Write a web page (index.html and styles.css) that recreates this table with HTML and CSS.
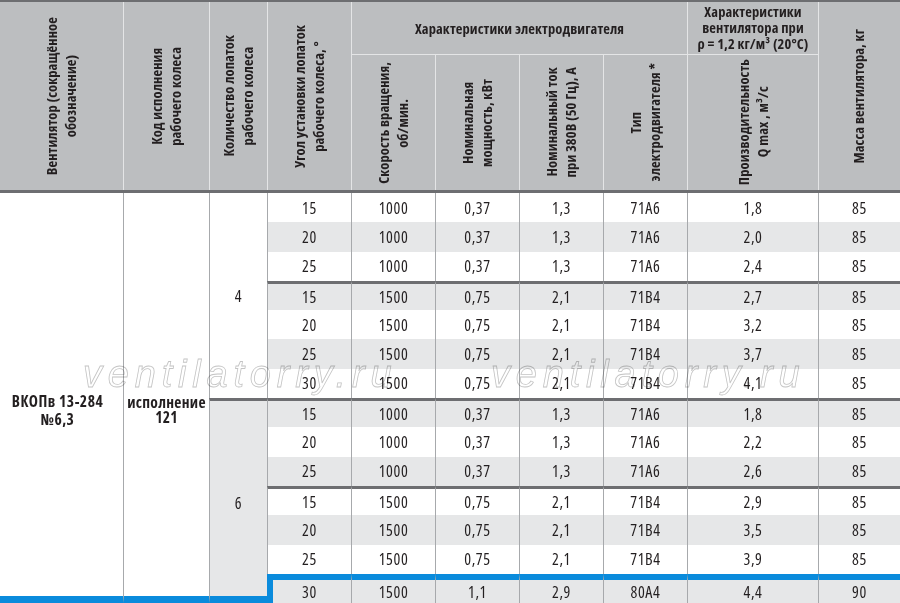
FILE: index.html
```html
<!DOCTYPE html>
<html lang="ru">
<head>
<meta charset="utf-8">
<title>ВКОПв 13-284 №6,3</title>
<link rel="stylesheet" href="styles.css">
</head>
<body>
<div class="sheet">
  <div class="head">
    <div class="hc vt h-fan"><span>Вентилятор (сокращённое<br>обозначение)</span></div>
    <div class="hc vt h-code"><span>Код исполнения<br>рабочего колеса</span></div>
    <div class="hc vt h-blades"><span>Количество лопаток<br>рабочего колеса</span></div>
    <div class="hc vt h-angle"><span>Угол установки лопаток<br>рабочего колеса, °</span></div>
    <div class="hc grp h-motor">Характеристики электродвигателя</div>
    <div class="hc grp h-fanchar">Характеристики<br>вентилятора при<br>ρ = 1,2 кг/м³ (20°С)</div>
    <div class="hc vt h-mass"><span>Масса вентилятора, кг</span></div>
    <div class="hc vt"><span>Скорость вращения,<br>об/мин.</span></div>
    <div class="hc vt"><span>Номинальная<br>мощность, кВт</span></div>
    <div class="hc vt"><span>Номинальный ток<br>при 380В (50 Гц), А</span></div>
    <div class="hc vt"><span>Тип<br>электродвигателя *</span></div>
    <div class="hc vt"><span>Производительность<br>Q max , м³/с</span></div>
  </div>
  <div class="body">
    <div class="fan">ВКОПв 13-284<br>№6,3</div>
    <div class="code">исполнение<br>121</div>
    <div class="blades b4">4</div>
    <div class="blades b6">6</div>

    <div class="row"><div>15</div><div>1000</div><div>0,37</div><div>1,3</div><div>71A6</div><div>1,8</div><div>85</div></div>
    <div class="row g"><div>20</div><div>1000</div><div>0,37</div><div>1,3</div><div>71A6</div><div>2,0</div><div>85</div></div>
    <div class="row"><div>25</div><div>1000</div><div>0,37</div><div>1,3</div><div>71A6</div><div>2,4</div><div>85</div></div>
    <div class="row g sep"><div>15</div><div>1500</div><div>0,75</div><div>2,1</div><div>71B4</div><div>2,7</div><div>85</div></div>
    <div class="row"><div>20</div><div>1500</div><div>0,75</div><div>2,1</div><div>71B4</div><div>3,2</div><div>85</div></div>
    <div class="row g"><div>25</div><div>1500</div><div>0,75</div><div>2,1</div><div>71B4</div><div>3,7</div><div>85</div></div>
    <div class="row"><div>30</div><div>1500</div><div>0,75</div><div>2,1</div><div>71B4</div><div>4,1</div><div>85</div></div>
    <div class="row g sep"><div>15</div><div>1000</div><div>0,37</div><div>1,3</div><div>71A6</div><div>1,8</div><div>85</div></div>
    <div class="row"><div>20</div><div>1000</div><div>0,37</div><div>1,3</div><div>71A6</div><div>2,2</div><div>85</div></div>
    <div class="row g"><div>25</div><div>1000</div><div>0,37</div><div>1,3</div><div>71A6</div><div>2,6</div><div>85</div></div>
    <div class="row sep"><div>15</div><div>1500</div><div>0,75</div><div>2,1</div><div>71B4</div><div>2,9</div><div>85</div></div>
    <div class="row g"><div>20</div><div>1500</div><div>0,75</div><div>2,1</div><div>71B4</div><div>3,5</div><div>85</div></div>
    <div class="row"><div>25</div><div>1500</div><div>0,75</div><div>2,1</div><div>71B4</div><div>3,9</div><div>85</div></div>
    <div class="row g last"><div>30</div><div>1500</div><div>1,1</div><div>2,9</div><div>80A4</div><div>4,4</div><div>90</div></div>
  </div>
  <div class="wm wm1">ventilatorry.ru</div>
  <div class="wm wm2">ventilatorry.ru</div>
</div>
</body>
</html>
```

FILE: styles.css
```css
html, body {
  margin: 0;
  padding: 0;
  background: #ffffff;
}

.sheet {
  position: relative;
  width: 900px;
  height: 603px;
  overflow: hidden;
  font-family: "Open Sans", "Liberation Sans", Arial, sans-serif;
  font-stretch: 75%;
  color: #231f20;
}

/* ---------- header ---------- */
.head {
  display: grid;
  grid-template-columns: 123px 86px 58px 84px 84px 84px 84px 84px 131px 82px;
  grid-template-rows: 53px 135px;
  border-top: 2px solid #6d6e71;
  border-bottom: 3px solid #6d6e71;
  background: #bcbec0;
}

.hc {
  box-sizing: border-box;
  border-left: 1px solid #e4e5e6;
  display: flex;
  align-items: center;
  justify-content: center;
  font-weight: bold;
  font-size: 14.5px;
  letter-spacing: 0.1px;
  text-align: center;
  white-space: nowrap;
}

.h-fan { grid-column: 1; grid-row: 1 / 3; border-left: none; }
.h-code { grid-column: 2; grid-row: 1 / 3; }
.h-blades { grid-column: 3; grid-row: 1 / 3; }
.h-angle { grid-column: 4; grid-row: 1 / 3; }
.h-motor { grid-column: 5 / 9; grid-row: 1; }
.h-fanchar { grid-column: 9; grid-row: 1; line-height: 16px; }
.h-mass { grid-column: 10; grid-row: 1 / 3; }

.grp {
  border-bottom: 1px solid #e4e5e6;
}

.vt span {
  writing-mode: vertical-rl;
  transform: rotate(180deg);
  line-height: 18.5px;
  text-align: center;
}

/* ---------- body ---------- */
.body {
  display: grid;
  grid-template-columns: 123px 86px 58px 84px 84px 84px 84px 84px 131px 82px;
  grid-template-rows: repeat(14, 29.3px);
  font-size: 16px;
  letter-spacing: 0.6px;
}

.body > div,
.row > div {
  box-sizing: border-box;
}

.fan {
  grid-column: 1;
  grid-row: 1 / 15;
  font-weight: bold;
  font-size: 15.5px;
  letter-spacing: 0.5px;
  line-height: 18px;
  text-align: center;
  padding-top: 199px;
  padding-right: 8px;
  border-bottom: 7px solid #0a8bdc;
}

.code {
  grid-column: 2;
  grid-row: 1 / 15;
  font-weight: bold;
  font-size: 15.5px;
  letter-spacing: 0.3px;
  line-height: 15px;
  text-align: center;
  padding-top: 202px;
  border-left: 1px solid #a7a9ac;
  border-bottom: 7px solid #0a8bdc;
}

.blades {
  grid-column: 3;
  display: flex;
  align-items: center;
  justify-content: center;
  border-left: 1px solid #a7a9ac;
}

.b4 { grid-row: 1 / 8; }

.b6 {
  grid-row: 8 / 15;
  background: #e6e7e8;
  border-top: 3px solid #6d6e71;
  border-bottom: 7px solid #0a8bdc;
  padding-top: 9px;
}

.row { display: contents; }

.row > div {
  display: flex;
  align-items: center;
  justify-content: center;
  border-left: 1px solid #a7a9ac;
}

.row.g > div { background: #e6e7e8; }

.row.sep > div { border-top: 3px solid #6d6e71; }

.row.last > div { border-top: 6px solid #0a8bdc; }

.row.last > div:first-child {
  border-left: 6px solid #0a8bdc;
  padding-right: 5px;
}

/* ---------- watermark ---------- */
.wm {
  position: absolute;
  top: 355px;
  font-family: "Liberation Sans", Arial, sans-serif;
  font-stretch: normal;
  font-style: italic;
  font-size: 38px;
  line-height: 38px;
  letter-spacing: 5.8px;
  color: #ffffff;
  -webkit-text-stroke: 0.8px #c4c4c4;
  mix-blend-mode: multiply;
  white-space: nowrap;
  pointer-events: none;
}

.wm1 { left: 83px; }
.wm2 { left: 491px; }
```
